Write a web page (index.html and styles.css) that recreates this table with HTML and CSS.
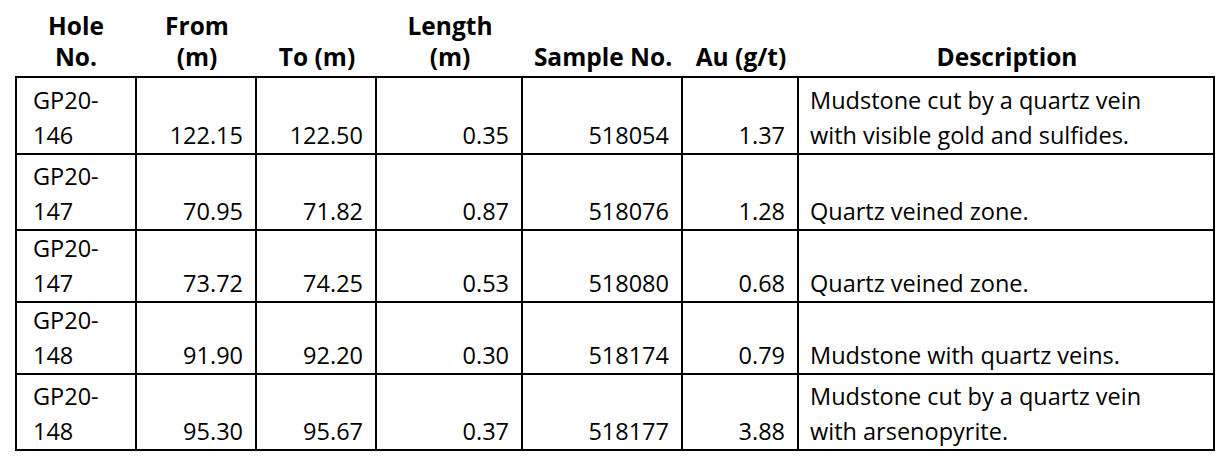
FILE: index.html
```html
<!DOCTYPE html>
<html lang="en">
<head>
<meta charset="utf-8">
<title>Assay results</title>
<link rel="stylesheet" href="styles.css">
</head>
<body>
<div class="page">
<table class="assay">
  <colgroup>
    <col class="c-hole">
    <col class="c-from">
    <col class="c-to">
    <col class="c-len">
    <col class="c-sample">
    <col class="c-au">
    <col class="c-desc">
  </colgroup>
  <thead>
    <tr class="head">
      <th>Hole<br>No.</th>
      <th>From<br>(m)</th>
      <th>To (m)</th>
      <th>Length<br>(m)</th>
      <th>Sample No.</th>
      <th>Au (g/t)</th>
      <th>Description</th>
    </tr>
  </thead>
  <tbody>
    <tr class="r1">
      <td class="hole">GP20-<br>146</td>
      <td class="num">122.15</td>
      <td class="num">122.50</td>
      <td class="num">0.35</td>
      <td class="num">518054</td>
      <td class="num">1.37</td>
      <td class="desc">Mudstone cut by a quartz vein<br>with visible gold and sulfides.</td>
    </tr>
    <tr class="r2">
      <td class="hole">GP20-<br>147</td>
      <td class="num">70.95</td>
      <td class="num">71.82</td>
      <td class="num">0.87</td>
      <td class="num">518076</td>
      <td class="num">1.28</td>
      <td class="desc">Quartz veined zone.</td>
    </tr>
    <tr class="r3">
      <td class="hole">GP20-<br>147</td>
      <td class="num">73.72</td>
      <td class="num">74.25</td>
      <td class="num">0.53</td>
      <td class="num">518080</td>
      <td class="num">0.68</td>
      <td class="desc">Quartz veined zone.</td>
    </tr>
    <tr class="r4">
      <td class="hole">GP20-<br>148</td>
      <td class="num">91.90</td>
      <td class="num">92.20</td>
      <td class="num">0.30</td>
      <td class="num">518174</td>
      <td class="num">0.79</td>
      <td class="desc">Mudstone with quartz veins.</td>
    </tr>
    <tr class="r5">
      <td class="hole">GP20-<br>148</td>
      <td class="num">95.30</td>
      <td class="num">95.67</td>
      <td class="num">0.37</td>
      <td class="num">518177</td>
      <td class="num">3.88</td>
      <td class="desc">Mudstone cut by a quartz vein<br>with arsenopyrite.</td>
    </tr>
  </tbody>
</table>
</div>
</body>
</html>
```

FILE: styles.css
```css
html, body {
  margin: 0;
  padding: 0;
  background: #ffffff;
}

.page {
  padding: 8px 0 0 15px;
}

.assay {
  border-collapse: separate;
  border-spacing: 0;
  table-layout: fixed;
  width: 1200px;
  font-family: "Open Sans", "Liberation Sans", sans-serif;
  font-size: 23.5px;
  color: #000000;
}

.c-hole { width: 122px; }
.c-from { width: 120px; }
.c-to { width: 120px; }
.c-len { width: 146px; }
.c-sample { width: 160px; }
.c-au { width: 116px; }
.c-desc { width: 416px; }

.assay th,
.assay td {
  box-sizing: border-box;
  vertical-align: bottom;
}

.head {
  height: 68px;
}

.assay th {
  font-weight: 700;
  font-size: 24.5px;
  text-align: center;
  line-height: 31px;
  padding: 0 0 4px 0;
}

.assay td {
  line-height: 35px;
  padding: 0 12px 0 12px;
  border-right: 2px solid #000;
  border-bottom: 2px solid #000;
  white-space: nowrap;
}

.assay tbody tr:first-child td {
  border-top: 2px solid #000;
}

.assay td.hole {
  border-left: 2px solid #000;
  padding-left: 16px;
  text-align: left;
}

.assay td.num {
  text-align: right;
}

.assay td.desc {
  text-align: left;
  padding-left: 11px;
}

.r1 { height: 79px; }
.r2 { height: 76px; }
.r3 { height: 68px; }
.r4 { height: 67px; }
.r5 { height: 76px; }
```
